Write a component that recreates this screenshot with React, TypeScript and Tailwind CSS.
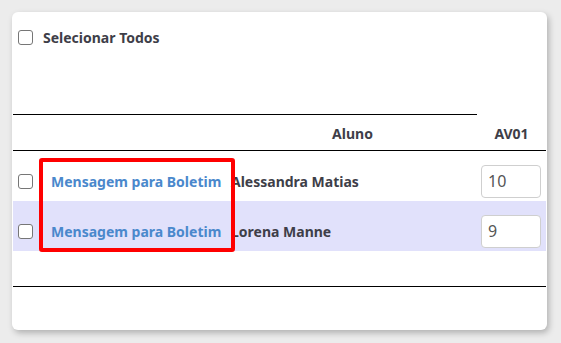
import React from 'react';

const students = [
  { name: 'Alessandra Matias', grade: '10' },
  { name: 'Lorena Manne', grade: '9' },
];

function Box() {
  return <div className="w-[15px] h-[15px] rounded-[3px] border border-[#767676] bg-white" />;
}

export default function App() {
  return (
    <div className="min-h-screen bg-[#ececec] pt-3 pl-3 font-['Noto_Sans',sans-serif] text-[14px] font-bold text-[#3e3e48]">
      <div className="relative w-[535px] h-[318px] rounded-md bg-white shadow-[2px_3px_6px_rgba(0,0,0,0.25)] px-px">
        <div className="flex items-center gap-[10px] pl-[5px] pt-[15px]">
          <Box />
          <span>Selecionar Todos</span>
        </div>

        <div className="mt-[66px] w-[464px] border-b border-black" />

        <div className="flex h-[36px] items-center pt-[2px] border-b border-black">
          <div className="w-[215px]" />
          <div className="flex-1 text-center">Aluno</div>
          <div className="w-[69px] text-center">AV01</div>
        </div>

        {students.map((s, i) => (
          <div
            key={s.name}
            className={`flex h-[50px] items-center pt-[10px] ${i % 2 === 1 ? 'bg-[#e1e1fb]' : 'bg-white'}`}
          >
            <div className="w-[28px] pl-[5px]">
              <Box />
            </div>
            <div className="w-[187px] pl-[10px] text-[#4a88cc]">Mensagem para Boletim</div>
            <div className="flex-1 pl-[3px]">{s.name}</div>
            <div className="w-[69px] pl-[4px]">
              <div className="flex h-[33px] w-[60px] items-center rounded-[4px] border border-[#cfcfcf] bg-white pl-[6px] text-[16px] font-normal text-[#555]">
                {s.grade}
              </div>
            </div>
          </div>
        ))}

        <div className="mt-[35px] border-b border-black" />

        <div className="absolute left-[27px] top-[146px] h-[94px] w-[196px] rounded-[3px] border-[4px] border-[#ff0000]" />
      </div>
    </div>
  );
}
